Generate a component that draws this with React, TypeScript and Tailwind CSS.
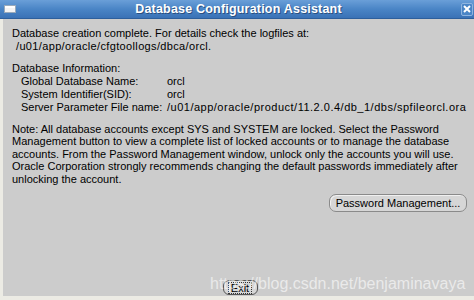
import React from 'react';

const font = { fontFamily: '"Liberation Sans", Arial, sans-serif' };

const infoRows: Array<[string, string]> = [
  ['Global Database Name:', 'orcl'],
  ['System Identifier(SID):', 'orcl'],
  ['Server Parameter File name:', '/u01/app/oracle/product/11.2.0.4/db_1/dbs/spfileorcl.ora'],
];

const noteLines = [
  'Note: All database accounts except SYS and SYSTEM are locked. Select the Password',
  'Management button to view a complete list of locked accounts or to manage the database',
  'accounts. From the Password Management window, unlock only the accounts you will use.',
  'Oracle Corporation strongly recommends changing the default passwords immediately after',
  'unlocking the account.',
];

export default function App() {
  return (
    <div
      className="relative w-[474px] h-[300px] overflow-hidden flex flex-col bg-[#cccccc] text-black"
      style={font}
    >
      {/* title bar */}
      <div className="relative h-[19px] shrink-0 flex items-center bg-gradient-to-b from-[#6a9fd8] via-[#4a85c6] to-[#3a72b6] border-b border-[#2d5f9c]">
        <div className="ml-[4px] w-[12px] h-[8px] bg-[#f4f4f4] border border-[#9ab] shadow-[inset_0_2px_0_#ffffff]" />
        <div className="flex-1 text-center text-white font-bold text-[12.5px] tracking-[0.2px] [text-shadow:1px_1px_0_#2a4f80]">
          Database Configuration Assistant
        </div>
        <div className="mr-[1px] w-[12px] h-[13px] flex items-center justify-center bg-[#4a85c6] border border-[#8fb5e0] rounded-[2px]">
          <svg width="8" height="8" viewBox="0 0 8 8">
            <path d="M1 1 L7 7 M7 1 L1 7" stroke="#ffffff" strokeWidth="2" />
          </svg>
        </div>
      </div>

      {/* body */}
      <div className="flex-1 flex flex-col border-l-[3px] border-b-[4px] border-[#ecebe4] pl-[9px] pt-[8px] text-[11px] leading-[12.5px]">
        <div>
          <div className="whitespace-nowrap">Database creation complete. For details check the logfiles at:</div>
          <div className="whitespace-nowrap pl-[4px] tracking-[0.35px]">/u01/app/oracle/cfgtoollogs/dbca/orcl.</div>
        </div>

        <div className="mt-[10px]">
          <div className="whitespace-nowrap">Database Information:</div>
          {infoRows.map(([label, value]) => (
            <div key={label} className="flex whitespace-nowrap h-[13px]">
              <span className="w-[155px] pl-[9px] shrink-0">{label}</span>
              <span className={value.length > 10 ? 'tracking-[0.5px]' : ''}>{value}</span>
            </div>
          ))}
        </div>

        <div className="mt-[9px]">
          {noteLines.map((line) => (
            <div key={line} className="whitespace-nowrap">{line}</div>
          ))}
        </div>

        <div className="mt-[9px] flex justify-end pr-[7px]">
          <button className="h-[18px] w-[138px] rounded-[7px] border border-[#8a8a8a] bg-[#d6d6d6] text-[11px] shadow-[inset_1px_1px_0_#f0f0f0]">
            Password Management...
          </button>
        </div>

        <div className="mt-auto mb-[1px] flex justify-center pr-[6px]">
          <button className="h-[15px] w-[35px] rounded-[6px] border border-[#555555] bg-[#d6d6d6] flex items-center justify-center">
            <span className="px-[2px] border border-dotted border-[#333333] leading-[10px] text-[11px]">Exit</span>
          </button>
        </div>
      </div>

      {/* watermark */}
      <div className="absolute left-[210px] top-[272px] text-[16px] text-white/60 whitespace-nowrap pointer-events-none">
        https://blog.csdn.net/benjaminavaya
      </div>
    </div>
  );
}
